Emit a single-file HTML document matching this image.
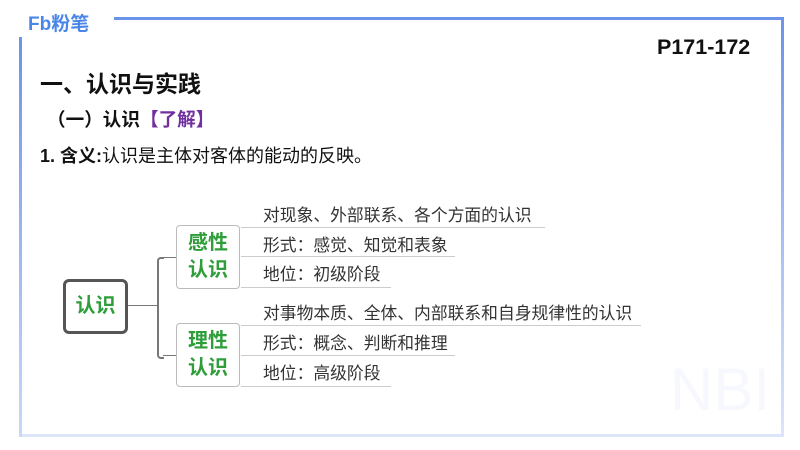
<!DOCTYPE html><html><head><meta charset="utf-8"><style>
body{margin:0;width:800px;height:450px;background:#fff;position:relative;overflow:hidden;font-family:"Liberation Sans","Noto Sans CJK SC",sans-serif;}
.a{position:absolute;white-space:nowrap}
.t{font-size:16.8px;color:#333;left:263px}
.u{position:absolute;height:1px;background:#ccc;left:241px}
.box{position:absolute;border:1px solid #bbb;border-radius:4px;width:62px;height:62px;color:#2f9e3a;font-weight:bold;font-size:20px;line-height:27px;text-align:center;display:flex;align-items:center;justify-content:center;background:#fff}
</style></head><body>
<div class="a" style="left:28px;top:9px;font-size:19px;font-weight:bold;color:#4a86e8">Fb粉笔</div>
<div class="a" style="left:114px;top:17px;width:670px;height:3px;background:#6b93ea"></div>
<div class="a" style="left:781px;top:17px;width:3px;height:420px;background:linear-gradient(#6b93ea,#dce6fb)"></div>
<div class="a" style="left:19px;top:434px;width:765px;height:3px;background:#dce6fb"></div>
<div class="a" style="left:19px;top:37px;width:3px;height:400px;background:linear-gradient(#6b93ea,#c8d8f8)"></div>
<div class="a" style="left:657px;top:35px;font-size:21.5px;font-weight:bold;color:#111">P171-172</div>
<div class="a" style="left:40px;top:65px;font-size:23px;font-weight:bold;color:#111">一、认识与实践</div>
<div class="a" style="left:47px;top:105px;font-size:18.6px;font-weight:bold;color:#111">（一）认识<span style="color:#7030a0">【了解】</span></div>
<div class="a" style="left:40px;top:142px;font-size:18px;color:#111"><b>1. 含义:</b>认识是主体对客体的能动的反映。</div>
<div class="a" style="left:63px;top:279px;width:59px;height:49px;border:3px solid #555;border-radius:6px;color:#2f9e3a;font-weight:bold;font-size:20px;text-align:center;line-height:49px">认识</div>
<div class="a" style="left:128px;top:305px;width:30px;height:1px;background:#777"></div>
<div class="a" style="left:157px;top:257px;width:5px;height:98px;border:2px solid #777;border-right:none;border-radius:4px 0 0 4px"></div>
<div class="a" style="left:163px;top:257px;width:14px;height:1px;background:#777"></div>
<div class="a" style="left:163px;top:355px;width:14px;height:1px;background:#777"></div>
<div class="box" style="left:176px;top:225px">感性<br>认识</div>
<div class="box" style="left:176px;top:323px">理性<br>认识</div>
<div class="a t" style="top:202px">对现象、外部联系、各个方面的认识</div><div class="u" style="top:227px;width:304px"></div>
<div class="a t" style="top:232px">形式：感觉、知觉和表象</div><div class="u" style="top:256px;width:214px"></div>
<div class="a t" style="top:261px">地位：初级阶段</div><div class="u" style="top:287px;width:150px"></div>
<div class="a t" style="top:300px">对事物本质、全体、内部联系和自身规律性的认识</div><div class="u" style="top:325px;width:400px"></div>
<div class="a t" style="top:330px">形式：概念、判断和推理</div><div class="u" style="top:355px;width:214px"></div>
<div class="a t" style="top:360px">地位：高级阶段</div><div class="u" style="top:386px;width:150px"></div>
<div class="a" style="left:670px;top:355px;font-size:60px;color:#f6f8fd">NBI</div>
</body></html>
